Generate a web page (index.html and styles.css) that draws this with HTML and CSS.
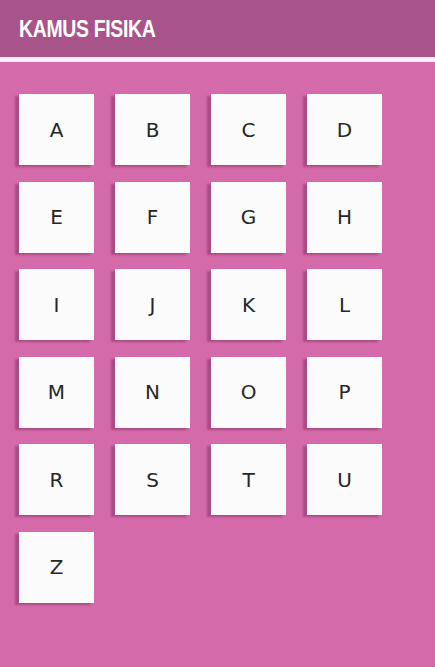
FILE: index.html
```html
<!DOCTYPE html>
<html lang="id">
  <head>
    <meta charset="UTF-8" />
    <meta name="viewport" content="width=device-width, initial-scale=1.0" />
    <title>Kamus Fisika</title>
    <link rel="stylesheet" href="styles.css">
  </head>
  <body>
    <header class="topbar">
      <h1 class="topbar__title">KAMUS FISIKA</h1>
    </header>
    <main class="letters">
      <a class="letter" href="#">A</a>
      <a class="letter" href="#">B</a>
      <a class="letter" href="#">C</a>
      <a class="letter" href="#">D</a>
      <a class="letter" href="#">E</a>
      <a class="letter" href="#">F</a>
      <a class="letter" href="#">G</a>
      <a class="letter" href="#">H</a>
      <a class="letter" href="#">I</a>
      <a class="letter" href="#">J</a>
      <a class="letter" href="#">K</a>
      <a class="letter" href="#">L</a>
      <a class="letter" href="#">M</a>
      <a class="letter" href="#">N</a>
      <a class="letter" href="#">O</a>
      <a class="letter" href="#">P</a>
      <a class="letter" href="#">R</a>
      <a class="letter" href="#">S</a>
      <a class="letter" href="#">T</a>
      <a class="letter" href="#">U</a>
      <a class="letter" href="#">Z</a>
    </main>
  </body>
</html>
```

FILE: styles.css
```css
:root {
  --clr-bar: #a8538a;
  --clr-bg: #d46aa9;
  --clr-tile: #fbfbfb;
  --clr-ink: #262626;
}

* {
  margin: 0;
  box-sizing: border-box;
}

body {
  background: var(--clr-bg);
  font-family: "DejaVu Sans", sans-serif;
  min-height: 100vh;
}

.topbar {
  height: 62px;
  background: var(--clr-bar);
  border-bottom: 5px solid #fbeef6;
  padding-left: 19px;
  display: flex;
  align-items: center;
}

/* no condensed face installed, so squeeze the bold one */
.topbar__title {
  color: #fff;
  font-family: "Liberation Sans", sans-serif;
  font-weight: 700;
  font-size: 24px;
  letter-spacing: -0.4px;
  line-height: 1;
  transform: scaleX(0.81);
  transform-origin: left center;
}

.letters {
  display: grid;
  grid-template-columns: repeat(4, 75px);
  grid-auto-rows: 71px;
  column-gap: 21px;
  row-gap: 16.5px;
  padding: 32px 0 0 19px;
}

.letter {
  display: flex;
  align-items: center;
  justify-content: center;
  background: var(--clr-tile);
  color: var(--clr-ink);
  text-decoration: none;
  font-size: 20px;
  box-shadow: -4px 2px 2px rgba(90, 20, 60, 0.35);
}
```
